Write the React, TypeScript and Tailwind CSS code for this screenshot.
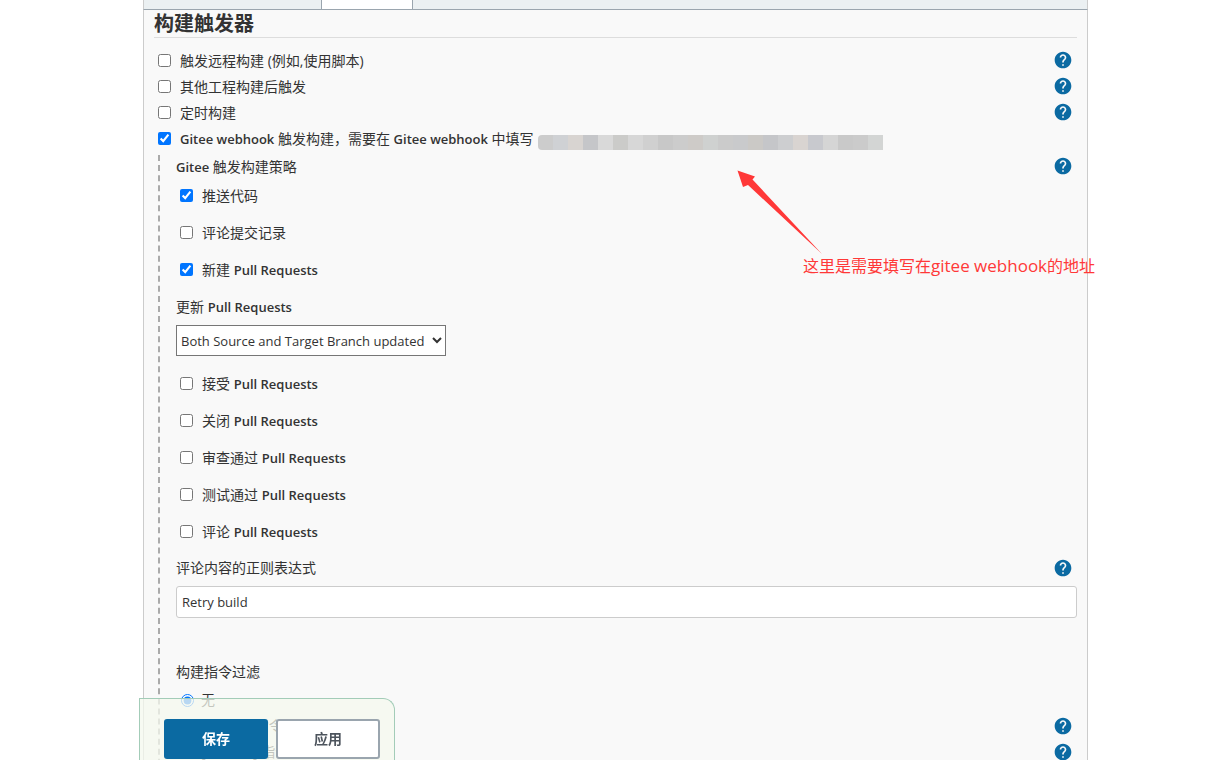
import { useState } from 'react';
import type { ReactNode } from 'react';

type OptionType = {
  id: string;
  label: ReactNode;
  checked?: boolean;
  help?: boolean;
};

const Latin = ({ children }: { children: ReactNode }) => (
  <span className="text-[13px] font-semibold">{children}</span>
);

const TRIGGERS: OptionType[] = [
  { id: 'remote', label: '触发远程构建 (例如,使用脚本)', help: true },
  { id: 'upstream', label: '其他工程构建后触发', help: true },
  { id: 'timer', label: '定时构建', help: true },
  {
    id: 'gitee',
    label: (
      <>
        <Latin>Gitee webhook</Latin> 触发构建，需要在{' '}
        <Latin>Gitee webhook</Latin> 中填写
      </>
    ),
    checked: true,
  },
];

const EVENTS_BEFORE: OptionType[] = [
  { id: 'push', label: '推送代码', checked: true },
  { id: 'commit-comment', label: '评论提交记录' },
  {
    id: 'pr-open',
    label: (
      <>
        新建 <Latin>Pull Requests</Latin>
      </>
    ),
    checked: true,
  },
];

const EVENTS_AFTER: OptionType[] = ['接受', '关闭', '审查通过', '测试通过', '评论'].map(
  (name) => ({
    id: `pr-${name}`,
    label: (
      <>
        {name} <Latin>Pull Requests</Latin>
      </>
    ),
  })
);

const FILTERS = [
  { id: 'none', label: '无', help: false },
  { id: 'ci-skip', label: '[ci-skip] 指令', help: true },
  { id: 'ci-build', label: '[ci-build] 指令触发构建', help: true },
];

// blocks that cover the webhook address
const MOSAIC = [
  'bg-[#cccccc]',
  'bg-[#cfd1d4]',
  'bg-[#d8d4d1]',
  'bg-[#c5c6c9]',
  'bg-[#d9d9d9]',
  'bg-[#cbcbc9]',
  'bg-[#d7d7d7]',
  'bg-[#d0d0d0]',
  'bg-[#c8c8c8]',
  'bg-[#cccccc]',
  'bg-[#cecbc8]',
  'bg-[#cfd1d0]',
  'bg-[#cbcbcb]',
  'bg-[#c9cacc]',
  'bg-[#cbc9c6]',
  'bg-[#c5c6c9]',
  'bg-[#cdced0]',
  'bg-[#d9d4d1]',
  'bg-[#c8c9ce]',
  'bg-[#d5d5d5]',
  'bg-[#c9c9c9]',
  'bg-[#cbcbcb]',
  'bg-[#d3d5d4]',
];

const HelpButton = () => (
  <button type="button" aria-label="帮助" className="mr-1 size-5 shrink-0">
    <svg viewBox="0 0 24 24" className="size-5" fill="#0b6aa2">
      <path d="M12 2C6.48 2 2 6.48 2 12s4.48 10 10 10 10-4.48 10-10S17.52 2 12 2zm1 17h-2v-2h2v2zm2.07-7.75-.9.92C13.45 12.9 13 13.5 13 15h-2v-.5c0-1.1.45-2.1 1.17-2.83l1.24-1.26c.37-.36.59-.86.59-1.41 0-1.1-.9-2-2-2s-2 .9-2 2H8c0-2.21 1.79-4 4-4s4 1.79 4 4c0 .88-.36 1.68-.93 2.25z" />
    </svg>
  </button>
);

const Checkbox = ({ option }: { option: OptionType }) => {
  const [checked, setChecked] = useState(Boolean(option.checked));
  return (
    <>
      <input
        id={option.id}
        type="checkbox"
        checked={checked}
        onChange={() => setChecked(!checked)}
        className="mr-[9px] size-[13px] shrink-0"
      />
      <label htmlFor={option.id} className="pt-px">
        {option.label}
      </label>
    </>
  );
};

const EventRow = ({ option }: { option: OptionType }) => (
  <div className="flex h-[37px] items-center pl-1">
    <Checkbox option={option} />
  </div>
);

const Annotation = () => (
  <div className="absolute top-[160px] left-[593px] text-[#ff3838]">
    <svg viewBox="0 0 86 86" width="86" height="86" fill="currentColor">
      <path d="M0.5 0.5 18 6.5 15.5 9.5 85 84 11 15 6 17z" />
    </svg>
    <p className="-mt-0.5 ml-[66px] text-base leading-6 whitespace-nowrap">
      这里是需要填写在<span className="text-[17px]">gitee webhook</span>的地址
    </p>
  </div>
);

const App = () => {
  const [filter, setFilter] = useState('none');

  return (
    <div className="h-screen overflow-hidden bg-white pr-[129px] pl-[143px] font-['Open_Sans','Noto_Sans_CJK_SC',sans-serif] text-sm leading-5 text-[#333]">
      <div className="flex h-[10px] border-x border-b border-x-[#ccc] border-b-[#9aa5ae] bg-[#ebf0f2]">
        <div className="ml-[177px] w-[92px] border-x border-[#9aa5ae] bg-white" />
      </div>
      <main className="relative border-x border-[#ccc] bg-[#f9f9f9] px-[10px]">
        <h1 className="h-7 border-b border-[#ddd] text-xl leading-7 font-bold">
          构建触发器
        </h1>

        <div className="mt-[9px]">
          {TRIGGERS.map((trigger) => (
            <div key={trigger.id} className="flex h-[26px] items-center pl-1">
              <Checkbox option={trigger} />
              {trigger.id === 'gitee' && (
                <div className="mt-2 ml-1 flex h-[15px] overflow-hidden rounded-l-sm">
                  {MOSAIC.map((color, index) => (
                    <div key={index} className={`w-[15px] ${color}`} />
                  ))}
                </div>
              )}
              <div className="grow" />
              {trigger.help && <HelpButton />}
            </div>
          ))}
        </div>

        <div className="mt-1 ml-1 border-l-2 border-dashed border-[#aaa] pb-10 pl-4">
          <div className="flex h-[22px] items-center justify-between">
            <p className="pt-px">
              <Latin>Gitee</Latin> 触发构建策略
            </p>
            <HelpButton />
          </div>
          {EVENTS_BEFORE.map((option) => (
            <EventRow key={option.id} option={option} />
          ))}

          <label htmlFor="pr-update" className="flex h-[37px] items-center">
            <span>
              更新 <Latin>Pull Requests</Latin>
            </span>
          </label>
          <select
            id="pr-update"
            className="mb-[9px] block h-[31px] w-[270px] border border-[#767676] bg-white text-[13px]"
          >
            <option>Both Source and Target Branch updated</option>
            <option>Source Branch updated</option>
            <option>Target Branch updated</option>
            <option>None</option>
          </select>

          {EVENTS_AFTER.map((option) => (
            <EventRow key={option.id} option={option} />
          ))}

          <div className="flex h-9 items-center justify-between">
            <label htmlFor="comment">评论内容的正则表达式</label>
            <HelpButton />
          </div>
          <input
            id="comment"
            type="text"
            defaultValue="Retry build"
            className="block h-8 w-full rounded-[3px] border border-[#ccc] bg-white px-[5px] text-[13px]"
          />

          <fieldset className="mt-[38px]">
            <legend className="h-[31px] leading-8">构建指令过滤</legend>
            {FILTERS.map((item) => (
              <div key={item.id} className="flex h-[26px] items-center pl-[5px]">
                <input
                  id={item.id}
                  type="radio"
                  name="filter"
                  checked={filter === item.id}
                  onChange={() => setFilter(item.id)}
                  className="mr-[7px] size-[13px]"
                />
                <label htmlFor={item.id} className="grow">
                  {item.label}
                </label>
                {item.help && <HelpButton />}
              </div>
            ))}
          </fieldset>
        </div>

        <Annotation />
      </main>

      <div className="fixed bottom-0 left-[139px] flex h-[62px] gap-2 rounded-tr-xl border-t border-r border-l border-[#a3ccb8] bg-[#f4f8ee]/75 pt-5 pr-[14px] pl-6">
        <button
          type="button"
          className="h-10 w-[104px] rounded-[3px] bg-[#0b6aa2] font-bold text-white"
        >
          保存
        </button>
        <button
          type="button"
          className="h-10 w-[104px] rounded-[3px] border-2 border-[#9aa5ae] bg-white font-bold text-[#4d545d]"
        >
          应用
        </button>
      </div>
    </div>
  );
};

export default App;
